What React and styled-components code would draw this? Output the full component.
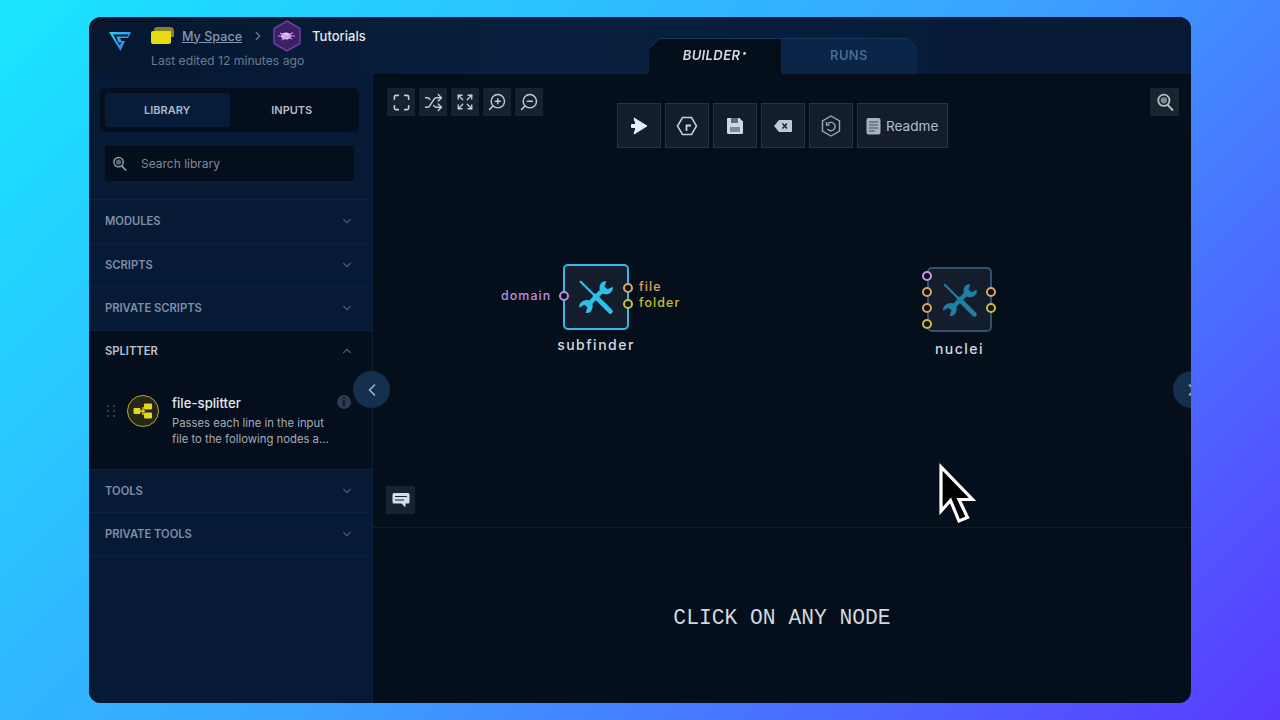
import React from 'react';
import styled, { createGlobalStyle } from 'styled-components';
import { ChevronDown, ChevronUp, ChevronLeft, ChevronRight, Maximize, Shuffle, Expand, ZoomIn, ZoomOut } from 'lucide-react';

const Global = createGlobalStyle`
  html, body { margin: 0; padding: 0; height: 100%; }
  body { font-family: Inter, "Noto Sans", sans-serif; overflow: hidden; }
  * { box-sizing: border-box; }
`;

const Page = styled.div`
  width: 1280px;
  height: 720px;
  display: flex;
  align-items: center;
  justify-content: center;
  background: linear-gradient(135deg, #19e6ff 0%, #3aa4ff 50%, #5a3aff 100%);
`;

const Win = styled.div`
  position: relative;
  width: 1102px;
  height: 686px;
  border-radius: 12px;
  overflow: hidden;
  display: flex;
  flex-direction: column;
  background: #050f1b;
`;

const Header = styled.header`
  height: 57px;
  flex: none;
  display: flex;
  align-items: flex-end;
  background: linear-gradient(90deg, #06172e, #081f3f 40%, #071a35);
`;

const Brand = styled.div`
  width: 560px;
  height: 100%;
  flex: none;
  display: flex;
  align-items: flex-start;
  padding: 13px 0 0 19px;
`;

const BrandText = styled.div`
  margin-left: 19px;
  margin-top: -10px;
`;

const Crumbs = styled.div`
  height: 32px;
  display: flex;
  align-items: center;
`;

const SpaceLink = styled.span`
  margin-left: 8px;
  font-size: 12.6px;
  font-weight: 500;
  color: #8496b0;
  text-decoration: underline;
`;

const Sep = styled.span`
  display: flex;
  margin: 0 7px 0 9px;
  color: #6f7f94;
`;

const CrumbCurrent = styled.span`
  margin-left: 10px;
  font-size: 13px;
  font-weight: 500;
  color: #e4e8ee;
`;

const Edited = styled.div`
  margin-top: 1px;
  font-size: 12.2px;
  color: #6a7b92;
`;

const Tabs = styled.div`
  display: flex;
  height: 35px;
  filter: drop-shadow(0 -1px 0 #15355f);
`;

const Tab = styled.div`
  height: 35px;
  width: ${p => p.$w}px;
  padding-bottom: 3px;
  display: flex;
  align-items: center;
  justify-content: center;
  font-size: 13px;
  letter-spacing: 0.4px;
  font-weight: 600;
  font-style: ${p => (p.$active ? 'italic' : 'normal')};
  color: ${p => (p.$active ? '#d5dbe3' : '#4a6a94')};
  background: ${p => (p.$active ? '#050f1b' : '#0a2547')};
  clip-path: ${p =>
    p.$active
      ? 'polygon(10px 0, 100% 0, 100% 100%, 0 100%, 0 10px)'
      : 'polygon(0 0, calc(100% - 10px) 0, 100% 10px, 100% 100%, 0 100%)'};
  sup { font-size: 9px; line-height: 0; margin-left: 2px; position: relative; top: -2px; }
`;

const Body = styled.div`
  flex: 1;
  display: flex;
  min-height: 0;
`;

const Sidebar = styled.aside`
  width: 284px;
  flex: none;
  display: flex;
  flex-direction: column;
  background: #061a36;
  border-right: 1px solid #0f2139;
`;

const Switch = styled.div`
  height: 44px;
  margin: 14px 13px 0 11px;
  padding: 5px;
  display: flex;
  background: #050e1c;
  border-radius: 5px;
`;

const SwitchItem = styled.div`
  width: 125px;
  display: flex;
  align-items: center;
  justify-content: center;
  font-size: 11px;
  font-weight: 600;
  color: ${p => (p.$active ? '#aab6c6' : '#b4bbc6')};
  background: ${p => (p.$active ? '#071c39' : 'transparent')};
  border-radius: 3px;
`;

const Search = styled.div`
  height: 35px;
  margin: 14px 18px 18px 16px;
  padding-left: 7px;
  display: flex;
  align-items: center;
  background: #050e1c;
  font-size: 12px;
  color: #7f8b9b;
  span { margin-left: 14px; }
`;

const Row = styled.div`
  height: ${p => p.$h || 43.5}px;
  padding: 0 18px 0 16px;
  display: flex;
  align-items: center;
  justify-content: space-between;
  font-size: 11.2px;
  font-weight: 600;
  color: ${p => (p.$open ? '#b9c2ce' : '#7e8fa6')};
  border-top: ${p => (p.$open ? 'none' : '1px solid #0a2344')};
  svg { color: #42597a; }
`;

const Section = styled.div`
  background: #050e1c;
  border-top: 1px solid #0a2344;
`;

const Item = styled.div`
  height: 97px;
  padding: 23px 22px 0 18px;
  display: flex;
  align-items: flex-start;
`;

const Dots = styled.div`
  width: 8px;
  margin-top: 10px;
  display: grid;
  grid-template-columns: 2px 2px;
  gap: 3px 4px;
  flex: none;
  i { width: 2px; height: 2px; background: #2f4059; display: block; }
`;

const SplitIcon = styled.div`
  width: 32px;
  height: 32px;
  margin-left: 12px;
  flex: none;
  border-radius: 50%;
  border: 1px solid #b8ad1e;
  background: #26261a;
  display: flex;
  align-items: center;
  justify-content: center;
`;

const ItemText = styled.div`
  margin-left: 13px;
  width: 165px;
  flex: none;
`;

const ItemTitle = styled.div`
  font-size: 13.2px;
  line-height: 16px;
  font-weight: 500;
  color: #e4e8ee;
`;

const ItemDesc = styled.div`
  margin-top: 4px;
  font-size: 11.3px;
  line-height: 16px;
  color: #a3acb8;
  white-space: nowrap;
`;

const Info = styled.div`
  width: 14px;
  height: 14px;
  margin-left: auto;
  flex: none;
  border-radius: 50%;
  background: #2d3c52;
  color: #0a1422;
  font-size: 10px;
  font-weight: 800;
  line-height: 14px;
  text-align: center;
`;

const Main = styled.main`
  flex: 1;
  min-width: 0;
  display: flex;
  flex-direction: column;
`;

const Canvas = styled.section`
  position: relative;
  height: 454px;
  flex: none;
  border-bottom: 1px solid #121d2c;
`;

const Console = styled.section`
  flex: 1;
  display: flex;
  align-items: center;
  justify-content: center;
  padding-top: 4px;
  font-family: "Liberation Mono", monospace;
  font-size: 21.3px;
  color: #d2d8de;
`;

const ToolRow = styled.div`
  position: absolute;
  left: 14px;
  top: 14px;
  display: flex;
  gap: 4px;
`;

const SmallBtn = styled.div`
  width: 28px;
  height: 28px;
  display: flex;
  align-items: center;
  justify-content: center;
  background: #172230;
  color: #c3ced9;
  svg { transform: ${p => (p.$flip ? 'scaleX(-1)' : 'none')}; }
`;

const ZoomCorner = styled(SmallBtn)`
  position: absolute;
  right: 12px;
  top: 14px;
  width: 29px;
  background: #1a2430;
`;

const CommentBtn = styled(SmallBtn)`
  position: absolute;
  left: 13px;
  bottom: 13px;
  width: 29px;
`;

const ActionRow = styled.div`
  position: absolute;
  left: 244px;
  top: 29px;
  display: flex;
  gap: 4px;
`;

const ActionBtn = styled.div`
  height: 45px;
  min-width: 44px;
  padding: ${p => (p.$wide ? '0 9px 0 8px' : '0')};
  display: flex;
  align-items: center;
  justify-content: center;
  gap: 5px;
  background: #131d2c;
  border: 1px solid #213450;
  font-size: 13.6px;
  color: #b4bfcc;
`;

const NodeWrap = styled.div`
  position: absolute;
  left: ${p => p.$x}px;
  top: ${p => p.$y}px;
  width: ${p => p.$size}px;
  height: ${p => p.$size}px;
`;

const NodeBox = styled.div`
  width: 100%;
  height: 100%;
  display: flex;
  align-items: center;
  justify-content: center;
  border-radius: 5px;
  background: #141d2b;
  border: 2px solid ${p => p.$line};
`;

const Port = styled.div`
  position: absolute;
  left: ${p => p.$x}px;
  top: ${p => p.$y}px;
  width: 10px;
  height: 10px;
  border-radius: 50%;
  background: #0a111c;
  border: 2px solid ${p => p.$c};
`;

const PortLabel = styled.div`
  position: absolute;
  left: ${p => p.$x}px;
  top: ${p => p.$y}px;
  font-size: 12.4px;
  line-height: 14px;
  font-weight: 500;
  letter-spacing: 1.1px;
  white-space: nowrap;
  color: ${p => p.$c};
`;

const NodeName = styled.div`
  position: absolute;
  left: -30px;
  right: -30px;
  top: ${p => p.$y}px;
  text-align: center;
  font-size: 14px;
  line-height: 16px;
  font-weight: 500;
  letter-spacing: 1.5px;
  color: #d3d9e0;
`;

const Round = styled.div`
  position: absolute;
  left: ${p => p.$x}px;
  top: 354px;
  width: 37px;
  height: 37px;
  border-radius: 50%;
  background: #15304f;
  color: #9fb2c9;
  display: flex;
  align-items: center;
  justify-content: center;
`;

const Pointer = styled.svg`
  position: absolute;
  left: 565px;
  top: 387px;
`;

const Logo = () => (
  <svg width="24" height="22" viewBox="0 0 24 22">
    <defs>
      <linearGradient id="lg" x1="0" y1="0" x2="1" y2="1">
        <stop offset="0" stopColor="#27d6f5" />
        <stop offset="1" stopColor="#3b63e8" />
      </linearGradient>
    </defs>
    <path d="M1 2H23L20 8H12L13.5 11H17L12.5 21L1 2ZM5 4.5L11.5 15.5L13.5 12.5H10.5L8.5 6.5H19.5L20.5 4.5Z" fill="url(#lg)" fillRule="evenodd" />
  </svg>
);

const Folder = () => (
  <svg width="23" height="18" viewBox="0 0 23 18">
    <path d="M3 3Q3 0 6 0H19Q23 0 23 4V10H3Z" fill="#8a7f2a" />
    <path d="M0 6Q0 4 2 4H20V15Q20 17 18 17H2Q0 17 0 15Z" fill="#e6dc14" />
  </svg>
);

const Hex = () => (
  <svg width="30" height="32" viewBox="0 0 30 32">
    <path d="M15 1L28 8.5V23.5L15 31L2 23.5V8.5Z" fill="#3d1f63" stroke="#6d3ea6" strokeWidth="1.5" />
    <ellipse cx="14" cy="16" rx="5" ry="3.6" fill="#e0c4f5" />
    <path d="M8 13L20 19M21 12.5L10 20M6 16H23" stroke="#c49be6" strokeWidth="1.1" />
  </svg>
);

const Tools = ({ size, color }) => (
  <svg width={size} height={size} viewBox="0 0 40 40">
    <path d="M3 3L19 19" stroke={color} strokeWidth="2.4" strokeLinecap="round" />
    <path d="M19 19L36 36" stroke={color} strokeWidth="5.4" strokeLinecap="round" />
    <path d="M14 26L27 13" stroke={color} strokeWidth="5" />
    <path d="M38.5 8.5L33 11.5L29.5 8.5L31.5 2.5C26 1.5 22.5 7 24.5 13C25 15.5 28 17 31 17C36 17 39.5 13 38.5 8.5Z" fill={color} />
    <path d="M1.5 32L7 28.5L10.5 31.5L8.5 37.5C14 39 17.5 33 16 27.5C15.5 25 11.5 23 8.5 23.5C3.5 24 0.5 28 1.5 32Z" fill={color} />
  </svg>
);

const SearchGlyph = ({ size = 15, color = '#8d98a6' }) => (
  <svg width={size} height={size} viewBox="0 0 16 16">
    <circle cx="7" cy="6.5" r="5" fill="none" stroke={color} strokeWidth="1.6" />
    <circle cx="7" cy="6.5" r="2.8" fill={color} opacity="0.65" />
    <path d="M10.5 10.5L14.5 15" stroke={color} strokeWidth="1.8" strokeLinecap="round" />
  </svg>
);

const RunIcon = () => (
  <svg width="20" height="20" viewBox="0 0 20 20">
    <path d="M5 2L18 10L5 18L7 11.5H2.5L2.5 8.5H7Z" fill="#e6eef9" strokeLinejoin="round" stroke="#e6eef9" />
  </svg>
);

const HexR = () => (
  <svg width="22" height="22" viewBox="0 0 22 22" fill="none" stroke="#c9d2dd" strokeWidth="1.5">
    <path d="M6.5 2.5H15.5L20.5 11L15.5 19.5H6.5L1.5 11Z" />
    <path d="M10.5 16V10.5H15" strokeWidth="1.8" />
  </svg>
);

const SaveIcon = () => (
  <svg width="18" height="18" viewBox="0 0 18 18">
    <path d="M2 1H13.5L17 4.5V15.5Q17 17 15.5 17H2.5Q1 17 1 15.5V2Q1 1 2 1Z" fill="#ccd8e8" />
    <rect x="5" y="1" width="7" height="5" fill="#5d6b80" />
    <rect x="4" y="10" width="10" height="5" fill="#7d8a9c" />
  </svg>
);

const EraseIcon = () => (
  <svg width="20" height="14" viewBox="0 0 20 14">
    <path d="M6 1H18Q19 1 19 2V12Q19 13 18 13H6L1 7Z" fill="#bfc8d4" />
    <path d="M9.5 4.5L14 9.5M14 4.5L9.5 9.5" stroke="#1a2433" strokeWidth="1.5" />
  </svg>
);

const HexUndo = () => (
  <svg width="20" height="22" viewBox="0 0 20 22" fill="none" stroke="#9aa7b6" strokeWidth="1.4">
    <path d="M10 1L18.5 6V16L10 21L1.5 16V6Z" />
    <path d="M7 8.5A4.2 4.2 0 1 1 6.5 14" />
    <path d="M5.5 7V10H8.5" />
  </svg>
);

const DocIcon = () => (
  <svg width="15" height="18" viewBox="0 0 15 18">
    <rect x="0.5" y="1" width="14" height="16.5" rx="2" fill="#a5b0bd" />
    <path d="M3 5H12M3 8H12M3 11H12M3 14H9" stroke="#3f4c5d" strokeWidth="1" />
  </svg>
);

const CommentIcon = () => (
  <svg width="18" height="17" viewBox="0 0 18 17">
    <path d="M2 1H16Q17.5 1 17.5 2.5V10Q17.5 11.5 16 11.5H13.5V15.5L9.5 11.5H2Q0.5 11.5 0.5 10V2.5Q0.5 1 2 1Z" fill="#d5dde6" />
    <path d="M3 4.5H15M3 8H12" stroke="#172230" strokeWidth="1.2" />
  </svg>
);

const SplitGlyph = () => (
  <svg width="20" height="16" viewBox="0 0 20 16">
    <path d="M6 8H12M10 4V12" stroke="#e3d91c" strokeWidth="1.4" />
    <rect x="0.5" y="5" width="7" height="6" rx="1" fill="#e3d91c" />
    <rect x="11" y="0.5" width="8" height="6" rx="1" fill="#e3d91c" />
    <rect x="11" y="9.5" width="8" height="6" rx="1" fill="#e3d91c" />
  </svg>
);

const closed = name => (
  <Row key={name}>
    {name}
    <ChevronDown size={14} />
  </Row>
);

const App = () => (
  <Page>
    <Global />
    <Win>
      <Header>
        <Brand>
          <Logo />
          <BrandText>
            <Crumbs>
              <Folder />
              <SpaceLink>My Space</SpaceLink>
              <Sep><ChevronRight size={14} /></Sep>
              <Hex />
              <CrumbCurrent>Tutorials</CrumbCurrent>
            </Crumbs>
            <Edited>Last edited 12 minutes ago</Edited>
          </BrandText>
        </Brand>
        <Tabs>
          <Tab $active $w={132}>BUILDER<sup>•</sup></Tab>
          <Tab $w={136}>RUNS</Tab>
        </Tabs>
      </Header>
      <Body>
        <Sidebar>
          <Switch>
            <SwitchItem $active>LIBRARY</SwitchItem>
            <SwitchItem>INPUTS</SwitchItem>
          </Switch>
          <Search>
            <SearchGlyph />
            <span>Search library</span>
          </Search>
          {closed('MODULES')}
          {closed('SCRIPTS')}
          {closed('PRIVATE SCRIPTS')}
          <Section>
            <Row $open $h={41}>
              SPLITTER
              <ChevronUp size={14} />
            </Row>
            <Item>
              <Dots>{[0, 1, 2, 3, 4, 5].map(i => <i key={i} />)}</Dots>
              <SplitIcon><SplitGlyph /></SplitIcon>
              <ItemText>
                <ItemTitle>file-splitter</ItemTitle>
                <ItemDesc>
                  Passes each line in the input<br />
                  file to the following nodes a...
                </ItemDesc>
              </ItemText>
              <Info>i</Info>
            </Item>
          </Section>
          {closed('TOOLS')}
          {closed('PRIVATE TOOLS')}
          <Row $h={1} />
        </Sidebar>
        <Main>
          <Canvas>
            <ToolRow>
              <SmallBtn><Maximize size={19} strokeWidth={2} /></SmallBtn>
              <SmallBtn><Shuffle size={19} strokeWidth={1.8} /></SmallBtn>
              <SmallBtn><Expand size={18} strokeWidth={1.8} /></SmallBtn>
              <SmallBtn $flip><ZoomIn size={20} strokeWidth={1.7} /></SmallBtn>
              <SmallBtn $flip><ZoomOut size={20} strokeWidth={1.7} /></SmallBtn>
            </ToolRow>
            <ActionRow>
              <ActionBtn><RunIcon /></ActionBtn>
              <ActionBtn><HexR /></ActionBtn>
              <ActionBtn><SaveIcon /></ActionBtn>
              <ActionBtn><EraseIcon /></ActionBtn>
              <ActionBtn><HexUndo /></ActionBtn>
              <ActionBtn $wide><DocIcon />Readme</ActionBtn>
            </ActionRow>
            <ZoomCorner><SearchGlyph size={18} color="#b5bec8" /></ZoomCorner>

            <NodeWrap $x={190} $y={190} $size={66}>
              <NodeBox $line="#3bb8e6"><Tools size={36} color="#2fc0ea" /></NodeBox>
              <Port $x={-4} $y={27} $c="#bd8ee0" />
              <Port $x={60} $y={19} $c="#e0a458" />
              <Port $x={60} $y={35} $c="#c9c02c" />
              <PortLabel $x={-62} $y={25} $c="#bd8ee0">domain</PortLabel>
              <PortLabel $x={76} $y={16} $c="#e0a458">file</PortLabel>
              <PortLabel $x={76} $y={32} $c="#c9c02c">folder</PortLabel>
              <NodeName $y={73}>subfinder</NodeName>
            </NodeWrap>

            <NodeWrap $x={554} $y={193} $size={65}>
              <NodeBox $line="#35506f"><Tools size={36} color="#1f7ea6" /></NodeBox>
              <Port $x={-5} $y={4} $c="#c39ae6" />
              <Port $x={-5} $y={20} $c="#dca468" />
              <Port $x={-5} $y={36} $c="#dca468" />
              <Port $x={-5} $y={52} $c="#c9c02c" />
              <Port $x={59} $y={20} $c="#dca468" />
              <Port $x={59} $y={36} $c="#c9c02c" />
              <NodeName $y={74}>nuclei</NodeName>
            </NodeWrap>

            <CommentBtn><CommentIcon /></CommentBtn>
            <Pointer width="42" height="66" viewBox="0 0 42 66">
              <path d="M3 6V50L12.5 39.5L21 60L29.5 56.5L21 38.5H34.5Z" fill="#000" stroke="#fff" strokeWidth="3.2" />
            </Pointer>
          </Canvas>
          <Console>CLICK ON ANY NODE</Console>
        </Main>
      </Body>
      <Round $x={264}><ChevronLeft size={20} /></Round>
      <Round $x={1084}><ChevronRight size={20} /></Round>
    </Win>
  </Page>
);

export default App;
